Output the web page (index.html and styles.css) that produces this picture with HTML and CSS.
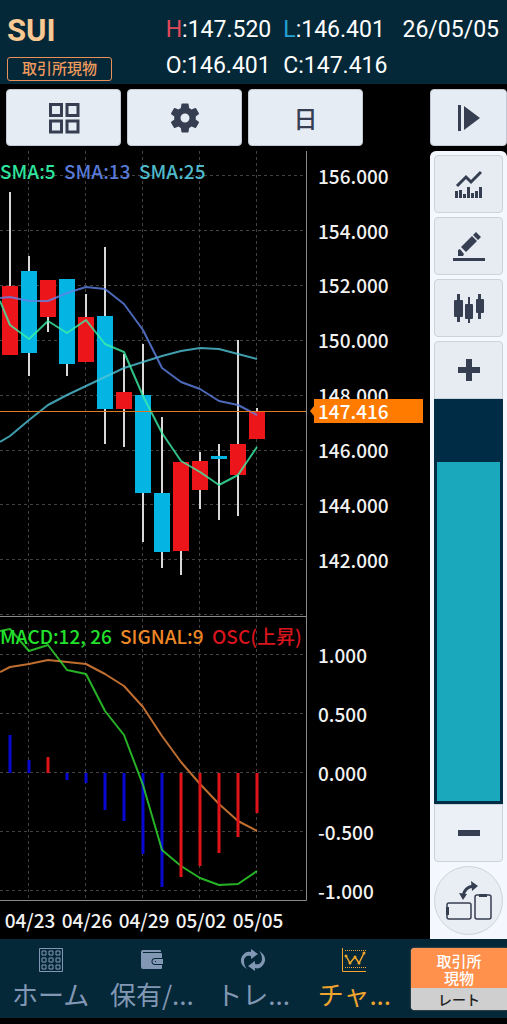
FILE: index.html
```
<!DOCTYPE html>
<html lang="ja">

<head>
    <meta charset="UTF-8" />
    <meta name="viewport" content="width=device-width, initial-scale=1.0" />
    <title>SUI チャート</title>
    <link rel="stylesheet" href="styles.css">
</head>

<body>
    <header class="header">
        <div class="symbol">
            <h1>SUI</h1>
            <span class="market-tag">取引所現物</span>
        </div>
        <div class="prices">
            <span><b class="high">H</b>:147.520</span>
            <span><b class="low">L</b>:146.401</span>
            <span class="date">26/05/05</span>
            <span>O:146.401</span>
            <span>C:147.416</span>
        </div>
    </header>

    <div class="toolbar">
        <button class="tool-btn" aria-label="レイアウト">
            <svg width="32" height="32" viewBox="0 0 32 32" fill="none" stroke="currentColor" stroke-width="3">
                <path d="M2.500 2.500h11v11h-11zM19 2.500h11v11h-11zM2.500 19h11v11h-11zM19 19h11v11h-11z" />
            </svg>
        </button>
        <button class="tool-btn" aria-label="設定">
            <svg width="36" height="36" viewBox="0 0 24 24" fill="currentColor">
                <path d="M19.140 12.940c.04-.3.06-.61.06-.94 0-.32-.02-.64-.07-.94l2.030-1.580a.49.49 0 0 0 .12-.61l-1.920-3.320a.49.49 0 0 0-.59-.22l-2.390.96c-.5-.38-1.030-.7-1.620-.94l-.36-2.540a.48.48 0 0 0-.48-.41h-3.840a.48.48 0 0 0-.47.41l-.36 2.540c-.59.24-1.130.57-1.620.94l-2.390-.96a.48.48 0 0 0-.59.22L2.740 8.870a.48.48 0 0 0 .12.61l2.030 1.580c-.05.3-.09.63-.09.94s.02.64.07.94l-2.030 1.580a.49.49 0 0 0-.12.61l1.920 3.320c.12.22.37.29.59.22l2.390-.96c.5.38 1.030.7 1.620.94l.36 2.540c.05.24.24.41.48.41h3.840c.24 0 .44-.17.47-.41l.36-2.540c.59-.24 1.130-.56 1.620-.94l2.390.96c.22.08.47 0 .59-.22l1.920-3.320a.48.48 0 0 0-.12-.61zM12 15a3 3 0 1 1 0-6 3 3 0 0 1 0 6z" />
            </svg>
        </button>
        <button class="tool-btn">日</button>
        <button class="tool-btn tool-btn-side" aria-label="パネルを閉じる">
            <svg width="24" height="26" viewBox="0 0 24 26" fill="currentColor">
                <path d="M1 0h3v26H1zM7 1l16 12L7 25z" />
            </svg>
        </button>
    </div>

    <main class="main">
        <svg class="chart" viewBox="0 151 430 788">
            <!-- grid -->
            <g class="grid">
                <path d="M28.500 151V900M85.500 151V900M142.500 151V900M199.500 151V900M256.500 151V900" />
                <path d="M0 175.500H306M0 230.500H306M0 285.500H306M0 340.500H306M0 395.500H306M0 450.500H306M0 504.500H306M0 559.500H306M0 614.500H306" />
                <path d="M0 654.500H306M0 713.500H306M0 772.500H306M0 831.500H306M0 890.500H306" />
            </g>
            <path class="frame" d="M306.500 151V900.500M0 616.500H306.500M0 900.500H306.500" />

            <!-- candles -->
            <path class="wick" d="M10 192V355M29 256V376M48 280V332M67 280V376M86 294V362M105 247V444M124 354V447M143 344V542M162 417V568M181 462V575M200 452V509M219 444V520M238 340V516M257 408V439" />
            <g class="up">
                <rect x="2" y="286" width="16" height="69" />
                <rect x="40" y="280" width="16" height="37" />
                <rect x="78" y="317" width="16" height="45" />
                <rect x="116" y="392" width="16" height="17" />
                <rect x="173" y="462" width="16" height="89" />
                <rect x="192" y="461" width="16" height="29" />
                <rect x="230" y="444" width="16" height="31" />
                <rect x="249" y="411" width="16" height="28" />
            </g>
            <g class="down">
                <rect x="21" y="271" width="16" height="82" />
                <rect x="59" y="279" width="16" height="85" />
                <rect x="97" y="316" width="16" height="93" />
                <rect x="135" y="395" width="16" height="98" />
                <rect x="154" y="493" width="16" height="59" />
                <rect x="211" y="456" width="16" height="3" />
            </g>

            <!-- moving averages -->
            <polyline class="line sma25" points="0,442 10,436 29,420 48,405 67,395 86,386 105,377 124,368 143,362 162,356 181,351 200,348 219,349 238,354 257,359" />
            <polyline class="line sma13" points="0,298 10,297 29,301 48,301 67,293 86,287 105,289 124,304 143,330 162,368 181,382 200,389 219,401 238,405 257,415" />
            <polyline class="line sma5" points="0,301 10,325 29,339 48,321 67,333 86,320 105,344 124,352 143,396 162,433 181,461 200,472 219,485 238,475 257,447" />

            <!-- oscillator -->
            <path class="osc-down" d="M10 735V773M29 760V773M67 773V780M86 773V783M105 773V810M124 773V821M143 773V854M162 773V887" />
            <polyline class="line signal" points="0,672 10,667 29,664 48,660 67,662 86,664 105,674 124,686 143,707 162,736 181,762 200,784 219,804 238,821 257,831" />
            <polyline class="line macd" points="0,631 10,629 29,651 48,645 67,670 86,674 105,711 124,735 143,785 162,850 181,866 200,878 219,885 238,884 257,871" />
            <path class="osc-up" d="M48 757V773M181 773V877M200 773V866M219 773V853M238 773V837M257 773V813" />

            <!-- legends -->
            <g class="legend">
                <text class="sma5-text" x="0" y="179">SMA:5</text>
                <text class="sma13-text" x="64" y="179">SMA:13</text>
                <text class="sma25-text" x="139" y="179">SMA:25</text>
                <text class="macd-text" x="0" y="644">MACD:12, 26</text>
                <text class="signal-text" x="120" y="644">SIGNAL:9</text>
                <text class="osc-text" x="212" y="644">OSC(上昇)</text>
            </g>

            <!-- price axis -->
            <g class="axis">
                <text x="318" y="184">156.000</text>
                <text x="318" y="239">154.000</text>
                <text x="318" y="293">152.000</text>
                <text x="318" y="348">150.000</text>
                <text x="318" y="403">148.000</text>
                <text x="318" y="458">146.000</text>
                <text x="318" y="513">144.000</text>
                <text x="318" y="568">142.000</text>
                <text x="318" y="663">1.000</text>
                <text x="318" y="722">0.500</text>
                <text x="318" y="781">0.000</text>
                <text x="318" y="840">-0.500</text>
                <text x="318" y="899">-1.000</text>
            </g>
            <g class="axis dates">
                <text x="30" y="928">04/23</text>
                <text x="87" y="928">04/26</text>
                <text x="144" y="928">04/29</text>
                <text x="201" y="928">05/02</text>
                <text x="258" y="928">05/05</text>
            </g>

            <!-- current price -->
            <path class="price-line" d="M0 411.500H306" />
            <path class="price-flag" d="M310 411l4-5v-7h109v24H314v-7z" />
            <text class="price-text" x="318" y="419">147.416</text>
        </svg>

        <aside class="sidebar">
            <button class="side-btn" aria-label="テクニカル">
                <svg width="27" height="28" viewBox="0 0 27 28" fill="currentColor">
                    <path d="M2 16 11 7l5 5L26 2" fill="none" stroke="currentColor" stroke-width="3" />
                    <path d="M0 21h3v7H0zM4 20h3v8H4zM8 24h3v4H8zM12 17h3v11h-3zM16 23h3v5h-3zM20 21h3v7h-3zM24 17h3v11h-3z" />
                </svg>
            </button>
            <button class="side-btn" aria-label="描画">
                <svg width="32" height="30" viewBox="0 0 32 30" fill="currentColor">
                    <path d="M0 27h32v3H0zM5 25v-6l2-1 4 5-1 2zM8 16 19 5l5 5-11 11zM20 4l3-3 5 5-3 3z" />
                </svg>
            </button>
            <button class="side-btn" aria-label="チャート種類">
                <svg width="30" height="30" viewBox="0 0 30 30" fill="currentColor">
                    <path d="M3 1h3v28H3zM14 4h2v26h-2zM24 1h3v25h-3z" />
                    <rect x="0" y="7" width="9" height="17" rx="1" />
                    <rect x="11" y="11" width="8" height="15" rx="1" />
                    <rect x="22" y="6" width="8" height="14" rx="1" />
                </svg>
            </button>
            <div class="zoom">
                <button class="side-btn zoom-in" aria-label="拡大">
                    <svg width="22" height="22" viewBox="0 0 22 22" fill="currentColor">
                        <path d="M8 0h6v8h8v6h-8v8H8v-8H0V8h8z" />
                    </svg>
                </button>
                <input class="zoom-range" type="range" min="0" max="100" value="85" aria-label="ズーム" />
                <button class="side-btn zoom-out" aria-label="縮小">
                    <svg width="22" height="6" viewBox="0 0 22 6" fill="currentColor">
                        <path d="M0 0h22v6H0z" />
                    </svg>
                </button>
            </div>
            <button class="rotate-btn" aria-label="画面回転">
                <svg width="46" height="40" viewBox="0 0 46 40" fill="none" stroke="currentColor" stroke-width="2">
                    <rect x="1" y="22" width="24" height="16" rx="2" stroke-width="1.500" />
                    <rect x="29" y="14" width="16" height="24" rx="2" stroke-width="1.500" />
                    <path d="M34 14h6v1h-6zM1 27v6h1v-6z" />
                    <path d="M17 15C18 9 21 6 27 5" stroke-width="3" />
                    <path d="M25 0l7 5-6 5zM13 12l8 1-4 6z" fill="currentColor" stroke="none" />
                </svg>
            </button>
        </aside>
    </main>

    <nav class="nav">
        <a class="nav-item" href="#home">
            <svg width="24" height="24" viewBox="0 0 24 24" fill="none" stroke="currentColor">
                <path d="M.5.5h23v23H.5z" />
                <path d="M3 3h4v4H3zM10 3h4v4h-4zM17 3h4v4h-4zM3 10h4v4H3zM10 10h4v4h-4zM17 10h4v4h-4zM3 17h4v4H3zM10 17h4v4h-4zM17 17h4v4h-4z" />
            </svg>
            <span>ホーム</span>
        </a>
        <a class="nav-item" href="#positions">
            <svg width="24" height="24" viewBox="0 0 24 24" fill="currentColor">
                <path d="M3 2h17a1 1 0 0 1 1 1v1H3a1 1 0 0 0 0 1h18a1 1 0 0 1 1 1v4h-7a3 3 0 0 0 0 7h7v3a1 1 0 0 1-1 1H3a2 2 0 0 1-2-2V4a2 2 0 0 1 2-2z" />
                <path d="M15 11h8v5h-8a2 2 0 0 1 0-5zm0 2v1h1v-1z" fill-rule="evenodd" />
            </svg>
            <span>保有/...</span>
        </a>
        <a class="nav-item" href="#trade">
            <svg width="26" height="24" viewBox="0 0 26 24" fill="currentColor">
                <path d="M7 21C1 18-1 12 3 7c2-3 5-4 8-3V1l7 5-7 5V8C7 7 4 9 4 13c0 3 1 6 3 8z" />
                <path d="M19 3c6 3 8 9 4 14-2 3-5 4-8 3v3l-7-5 7-5v3c4 1 7-1 7-5 0-3-1-6-3-8z" />
            </svg>
            <span>トレ...</span>
        </a>
        <a class="nav-item active" href="#chart">
            <svg width="26" height="26" viewBox="0 0 26 26" fill="none" stroke="currentColor">
                <path d="M1.500 1v23.500H25" />
                <path d="M4 3.500h21M4 20.500h21" stroke-dasharray="1 1" />
                <path d="M5 9l4 7 5-6 4 6 5-10" stroke-width="1.500" />
                <g fill="currentColor" stroke="none">
                    <circle cx="5" cy="9" r="1.500" />
                    <circle cx="9" cy="16" r="1.500" />
                    <circle cx="14" cy="10" r="1.500" />
                    <circle cx="18" cy="16" r="1.500" />
                    <circle cx="23" cy="6" r="1.500" />
                </g>
            </svg>
            <span>チャ...</span>
        </a>
        <button class="rate-btn">
            <span class="rate-market">取引所<br>現物</span>
            <span class="rate-label">レート</span>
        </button>
    </nav>
</body>

</html>
```
FILE: styles.css
```
* {
    box-sizing: border-box;
}

body {
    margin: 0;
    min-height: 100vh;
    display: flex;
    flex-direction: column;
    background-color: #000;
    color: #fff;
    font-family: Roboto, "Noto Sans CJK JP", sans-serif;
}

button {
    margin: 0;
    padding: 0;
    border: none;
    font-family: inherit;
    cursor: pointer;
}

svg {
    display: block;
}

/* Header with symbol and prices */
.header {
    display: flex;
    justify-content: space-between;
    padding: 12px 8px 0 7px;
    background-color: #042838;
}

.symbol {
    display: flex;
    flex-direction: column;
    align-items: flex-start;
    gap: 8px;
}

.symbol h1 {
    margin: 0;
    color: #f9c993;
    font-size: 31px;
    line-height: 37px;
}

.market-tag {
    padding: 0 14px;
    border: 1px solid #e8925a;
    border-radius: 3px;
    color: #f09a5e;
    font-size: 15px;
    font-weight: 500;
    line-height: 22px;
}

.prices {
    display: grid;
    grid-template-columns: auto auto auto;
    column-gap: 12px;
    font-size: 23px;
    line-height: 36px;
}

.prices b {
    font-weight: 400;
}

.prices .date {
    padding-left: 3px;
}

.high {
    color: #e0485a;
}

.low {
    color: #22a3d6;
}

/* Toolbar above the chart */
.toolbar {
    display: flex;
    gap: 6px;
    padding: 5px 0 5px 6px;
}

.tool-btn {
    flex: 0 1 115px;
    height: 57px;
    display: flex;
    justify-content: center;
    align-items: center;
    border: 1px solid #c3c9d3;
    border-radius: 4px;
    background-color: #e6ecf4;
    color: #363f52;
    font-size: 24px;
    font-weight: 500;
}

.tool-btn-side {
    flex: 0 0 77px;
    margin-left: auto;
}

/* Chart and side controls */
.main {
    flex: 1;
    display: flex;
}

.chart {
    flex: 1;
    min-width: 0;
    font-family: "Noto Sans CJK JP", sans-serif;
    font-size: 19px;
    font-weight: 500;
}

.grid {
    fill: none;
    stroke: #424242;
    stroke-dasharray: 3 3;
}

.frame {
    fill: none;
    stroke: #8a8a8a;
}

.wick {
    stroke: #d8d8d8;
    stroke-width: 2;
}

.up {
    fill: #ec151a;
}

.down {
    fill: #04b4e2;
}

.line {
    fill: none;
    stroke-width: 2;
    stroke-linejoin: round;
    opacity: 0.8;
}

.sma5 {
    stroke: #3cf0a8;
}

.sma13 {
    stroke: #6083e8;
}

.sma25 {
    stroke: #50c4d8;
}

.macd {
    stroke: #30e030;
}

.signal {
    stroke: #f08a3c;
}

.osc-up {
    stroke: #e01418;
    stroke-width: 3;
}

.osc-down {
    stroke: #0808d0;
    stroke-width: 3;
}

.sma5-text {
    fill: #2ee59d;
}

.sma13-text {
    fill: #587bd8;
}

.sma25-text {
    fill: #4fb9cc;
}

.macd-text {
    fill: #22e32c;
}

.signal-text {
    fill: #ee8827;
}

.osc-text {
    fill: #d8141c;
}

.axis {
    fill: #f2f2f2;
}

.dates {
    text-anchor: middle;
}

.price-line {
    stroke: #e07a20;
}

.price-flag {
    fill: #ff7b00;
}

.price-text {
    fill: #fff;
}

.sidebar {
    flex: 0 0 77px;
    display: flex;
    flex-direction: column;
    gap: 4px;
    padding: 4px;
    border-radius: 6px 6px 0 0;
    background-color: #f4f7fd;
}

.side-btn {
    flex: none;
    width: 100%;
    height: 58px;
    display: flex;
    justify-content: center;
    align-items: center;
    border: 1px solid #ccd2dc;
    border-radius: 4px;
    background-color: #e6ecf2;
    color: #363f52;
}

.zoom {
    flex: 1;
    display: flex;
    flex-direction: column;
}

.zoom-in {
    border-radius: 4px 4px 0 0;
}

.zoom-out {
    border-radius: 0 0 4px 4px;
    background-color: #ebf0f6;
}

/* Vertical slider filled from the bottom */
.zoom-range {
    appearance: none;
    flex: 1;
    width: 100%;
    min-height: 100px;
    margin: 0;
    border: 3px solid #002d45;
    background: linear-gradient(to top, #1aa8bd 85%, #002d45 85%);
    writing-mode: vertical-lr;
    direction: rtl;
}

.zoom-range::-webkit-slider-thumb {
    appearance: none;
    width: 61px;
    height: 10px;
    background-color: transparent;
}

.rotate-btn {
    flex: none;
    width: 69px;
    height: 69px;
    display: flex;
    justify-content: center;
    align-items: center;
    border: 1px solid #ccd2dc;
    border-radius: 50%;
    background-color: #e9eef4;
    color: #363f52;
}

/* Bottom navigation */
.nav {
    display: flex;
    margin-bottom: 6px;
    background-color: #042838;
}

.nav-item {
    flex: 1;
    height: 79px;
    padding-top: 8px;
    display: flex;
    flex-direction: column;
    align-items: center;
    color: #8297b4;
    font-family: "Noto Sans CJK JP", sans-serif;
    font-size: 26px;
    line-height: 42px;
    text-decoration: none;
    white-space: nowrap;
}

.nav-item svg {
    height: 26px;
}

.nav-item.active {
    color: #f2a52c;
}

.rate-btn {
    flex: 0 0 96px;
    align-self: flex-start;
    margin: 9px 0 0 6px;
    border-radius: 4px 0 0 4px;
    overflow: hidden;
    font-family: "Noto Sans CJK JP", sans-serif;
    font-weight: 500;
    box-shadow: 0 0 2px #8a7a70;
}

.rate-market {
    display: block;
    padding: 4px 0 2px;
    background-color: #ff914d;
    color: #fff;
    font-size: 15px;
    line-height: 17px;
}

.rate-label {
    display: block;
    background-color: #cfcfcf;
    color: #222;
    font-size: 14px;
    line-height: 22px;
}
```
